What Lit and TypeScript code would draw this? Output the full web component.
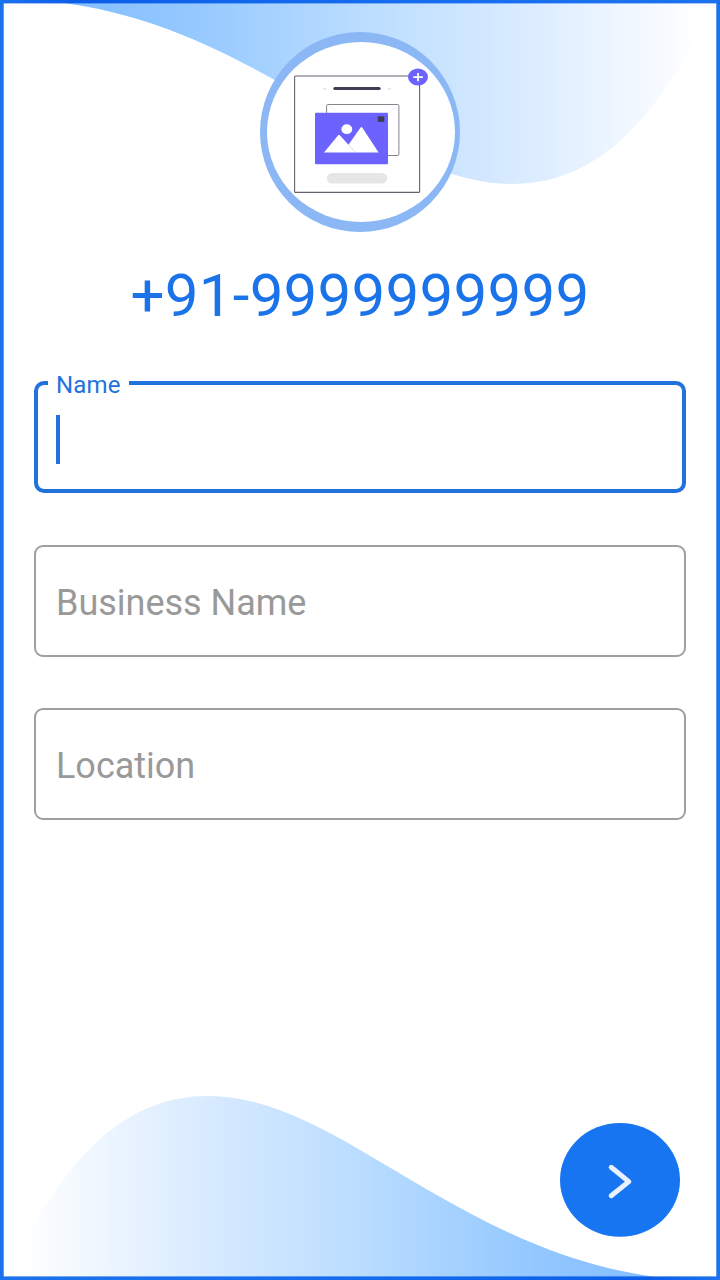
import { LitElement, html, css } from "lit";
import { customElement, property } from "lit/decorators.js";

@customElement("outlined-field")
class OutlinedField extends LitElement {
  @property() label = "";
  @property({ type: Boolean }) active = false;

  static styles = css`
    :host { display: block; }
    .box {
      position: relative;
      box-sizing: border-box;
      height: 112px;
      border: 2px solid #9f9f9f;
      border-radius: 9px;
      background: #fff;
      padding-left: 20px;
      display: flex;
      align-items: center;
    }
    .box.active {
      border: 4px solid #2272dd;
      border-radius: 10px;
      padding-left: 18px;
    }
    .hint {
      font-size: 36px;
      line-height: 42px;
      letter-spacing: -0.02px;
      color: #999;
      padding-top: 4px;
    }
    .floating {
      position: absolute;
      left: 10px;
      top: -14px;
      padding: 0 8px;
      background: #fff;
      color: #2272dd;
      font-size: 24px;
      line-height: 28px;
      letter-spacing: 0.2px;
    }
    .caret { width: 4px; height: 49px; background: #2272dd; margin-top: 5px; }
  `;

  render() {
    return this.active
      ? html`<div class="box active"><span class="floating">${this.label}</span><span class="caret"></span></div>`
      : html`<div class="box"><span class="hint">${this.label}</span></div>`;
  }
}

@customElement("app-root")
class AppRoot extends LitElement {
  static styles = css`
    :host {
      display: block;
      position: relative;
      width: 720px;
      height: 1280px;
      overflow: hidden;
      background: #fff;
      font-family: Roboto, sans-serif;
    }
    .backdrop { position: absolute; inset: 0; display: block; }
    .page {
      position: relative;
      box-sizing: border-box;
      height: 100%;
      padding: 32px 34px 43px;
      display: flex;
      flex-direction: column;
    }
    .avatar { display: block; align-self: center; flex: none; }
    .phone {
      align-self: center;
      margin-top: 28px;
      font-size: 60px;
      line-height: 72px;
      letter-spacing: 0.26px;
      color: #1a73e8;
      white-space: nowrap;
    }
    .fields { display: flex; flex-direction: column; gap: 51.7px; margin-top: 49px; }
    .next {
      margin: auto 6px 0 auto;
      padding: 0;
      border: 0;
      background: none;
      display: block;
      line-height: 0;
    }
  `;

  render() {
    const wave = "M36 0C172 10 270 78 360 130C410 159 460 184 512 184C590 184 655 130 715 0Z";
    return html`
      <svg class="backdrop" width="720" height="1280" viewBox="0 0 720 1280">
        <defs>
          <linearGradient id="sky" gradientUnits="userSpaceOnUse" x1="50" y1="0" x2="700" y2="0">
            <stop offset="0" stop-color="#82bdff" />
            <stop offset="0.2" stop-color="#92c7ff" />
            <stop offset="0.47" stop-color="#b9dcff" />
            <stop offset="0.72" stop-color="#d9ebff" />
            <stop offset="1" stop-color="#ffffff" />
          </linearGradient>
          <linearGradient id="edge" gradientUnits="userSpaceOnUse" x1="0" y1="0" x2="720" y2="0">
            <stop offset="0" stop-color="#1b73f0" />
            <stop offset="0.1" stop-color="#0c5de8" />
            <stop offset="0.4" stop-color="#1269ed" />
            <stop offset="0.7" stop-color="#186fef" />
            <stop offset="1" stop-color="#1c72ec" />
          </linearGradient>
        </defs>
        <path d=${wave} fill="url(#sky)" />
        <path d=${wave} fill="url(#sky)" transform="rotate(180 360 640)" />
        <path d="M0 0H3.7V1280H0ZM716.3 0H720V1280H716.3Z" fill="#1b71ee" />
        <rect width="720" height="3.4" fill="url(#edge)" />
        <rect width="720" height="3.6" fill="url(#edge)" transform="rotate(180 360 640)" />
      </svg>
      <main class="page">
        <svg class="avatar" width="200" height="200" viewBox="260 32 200 200">
          <circle cx="360" cy="132" r="100" fill="#8bb7f5" />
          <ellipse cx="361" cy="132" rx="94" ry="90" fill="#fff" />
          <rect x="294.6" y="76" width="125" height="116.4" rx="1" fill="none" stroke="#66636f" stroke-width="1.1" />
          <path d="M334.8 88.5H379.2" stroke="#3f3d56" stroke-width="3" stroke-linecap="round" />
          <path d="M323 88.7h3.5M387.5 88.7h3.5" stroke="#e8e8e8" stroke-width="1.5" />
          <rect x="326.6" y="104.5" width="72.3" height="51" rx="1" fill="#fff" stroke="#85838c" />
          <path d="M390 112l8-6M390 149l8 6M327 105l9 6" stroke="#eeeeee" stroke-width=".8" />
          <rect x="315" y="112.8" width="73" height="51.5" rx="1" fill="#6c63ff" />
          <rect x="377.8" y="116.3" width="6.5" height="5.6" fill="#3f3d56" />
          <ellipse cx="346.8" cy="129.2" rx="5.4" ry="4.9" fill="#fff" />
          <path d="M324 152.6L338.2 135.2Q339 134.3 339.8 135.2L348.5 144.8L360.6 127.5Q361.4 126.4 362.2 127.5L378.6 152.6Z" fill="#fff" />
          <path d="M348.5 144.8L355 152.2" stroke="#cfcfd4" stroke-width=".7" />
          <rect x="326.8" y="173" width="60.4" height="10.6" rx="5.3" fill="#e6e6e6" />
          <ellipse cx="418" cy="77" rx="10" ry="8.6" fill="#6c63ff" />
          <path d="M413.3 77.2H422.9M418 73.1V81.3" stroke="#fff" stroke-width="1.8" />
        </svg>
        <div class="phone">+91-9999999999</div>
        <div class="fields">
          <outlined-field label="Name" active></outlined-field>
          <outlined-field label="Business Name"></outlined-field>
          <outlined-field label="Location"></outlined-field>
        </div>
        <button class="next" aria-label="Next">
          <svg width="120" height="114" viewBox="560 1123 120 114">
            <ellipse cx="620" cy="1179.9" rx="60" ry="56.9" fill="#1775f1" />
            <path d="M611.2 1167.3L628.8 1181.6L611.2 1195.7" fill="none" stroke="#e8f1fe" stroke-width="5" stroke-linecap="round" stroke-linejoin="round" />
          </svg>
        </button>
      </main>
    `;
  }
}
